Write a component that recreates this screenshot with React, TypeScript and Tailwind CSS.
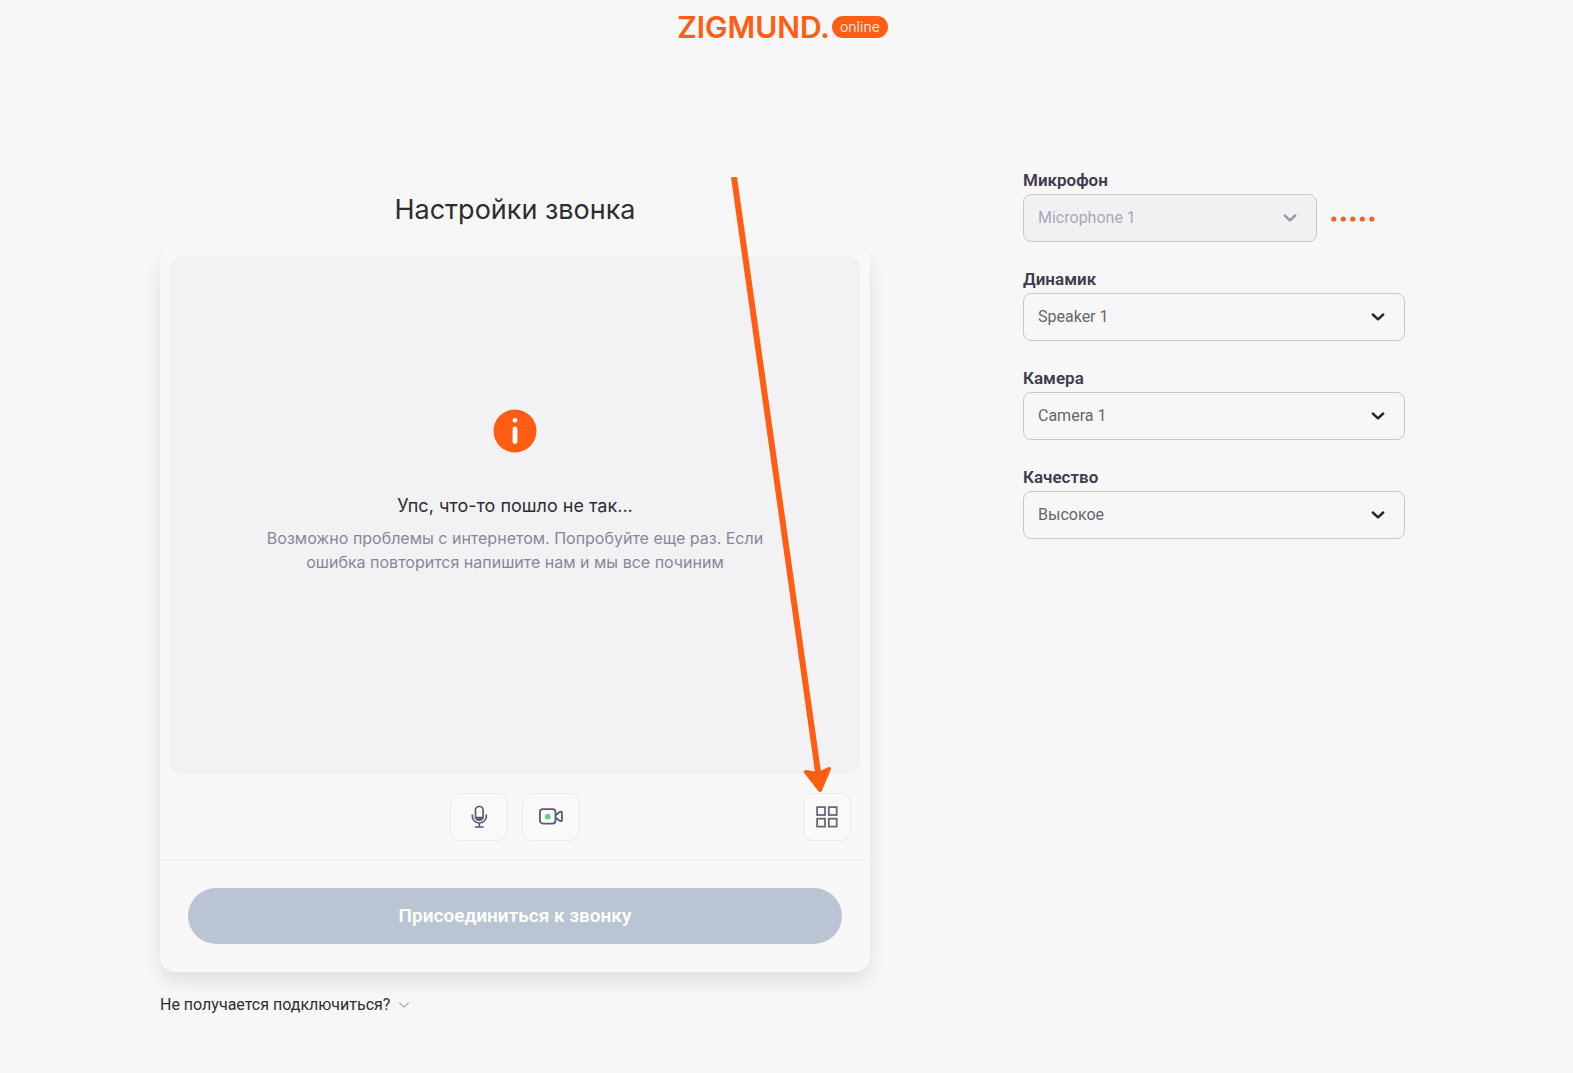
import { useState } from "react"

interface SelectFieldProps {
  id: string
  label: string
  options: string[]
  disabled?: boolean
  level?: boolean
}

function Chevron({ className }: { className: string }) {
  return (
    <svg viewBox="0 0 14 8" fill="none" stroke="currentColor" strokeLinecap="round" strokeLinejoin="round" className={className}>
      <path d="M1.8 1.5 7 6.3 12.2 1.5" />
    </svg>
  )
}

function SelectField({ id, label, options, disabled, level }: SelectFieldProps) {
  const [value, setValue] = useState(options[0])

  return (
    <div className="flex flex-col">
      <label htmlFor={id} className="text-[17px] leading-7 font-semibold text-[#3f3a4d]">
        {label}
      </label>
      <div className="flex items-center gap-3.5">
        <div className="relative flex-1">
          <select
            id={id}
            value={value}
            disabled={disabled}
            onChange={(e) => setValue(e.target.value)}
            className="block h-12 w-full appearance-none rounded-lg border border-[#c9c9cb] px-3.5 text-base text-[#66666f] disabled:bg-[#f1f1f4] disabled:text-[#a9a9b6] disabled:opacity-100"
          >
            {options.map((o) => (
              <option key={o}>{o}</option>
            ))}
          </select>
          <Chevron
            className={`pointer-events-none absolute top-5 right-5 h-2 w-3.5 stroke-[2.4] ${
              disabled ? "text-[#9a9aa8]" : "text-[#26262b]"
            }`}
          />
        </div>
        {/* Nivel del micrófono */}
        {level && (
          <div className="flex w-[74px] pt-0.5">
            <svg viewBox="0 0 44 6" fill="#f4622a" className="h-1.5 w-11">
              {[0, 1, 2, 3, 4].map((i) => (
                <circle key={i} cx={2.8 + i * 9.5} cy="3" r="2.6" />
              ))}
            </svg>
          </div>
        )}
      </div>
    </div>
  )
}

function MicIcon() {
  return (
    <svg viewBox="0 0 24 24" fill="none" stroke="#5d5a6e" strokeWidth="1.7" strokeLinecap="round" className="size-6">
      <rect x="8.5" y="1.5" width="7.6" height="13.6" rx="3.4" />
      <path d="M8.6 11.8h7.400c-.2 2-1.700 3.200-3.700 3.200s-3.500-1.200-3.700-3.200z" fill="#5d5a6e" stroke="none" />
      <path d="M5.300 10v1.200a7 6.800 0 0 0 14 0V10M12.300 18v3.600M8.600 22h7.400" />
    </svg>
  )
}

function CameraIcon() {
  return (
    <svg viewBox="0 0 26 24" fill="none" stroke="#5d5a6e" strokeWidth="1.8" strokeLinejoin="round" className="h-6 w-[26px]">
      <rect x="1.9" y="4.2" width="15.6" height="14.4" rx="3" />
      <path d="m17.7 10 4.400-3.200q1.800-.7 1.800.8v7.600q0 1.500-1.800.8L17.700 12.800" />
      <circle cx="9.700" cy="11.600" r="2.900" fill="#5fd283" stroke="none" />
    </svg>
  )
}

function GridIcon() {
  return (
    <svg viewBox="0 0 22 22" fill="none" stroke="#6a6876" strokeWidth="1.8" className="size-[22px]">
      <rect x="1.1" y="1.1" width="7.9" height="7.9" />
      <rect x="12.8" y="1.1" width="7.9" height="7.9" />
      <rect x="1.1" y="12.7" width="7.9" height="7.9" />
      <rect x="12.8" y="12.7" width="7.9" height="7.9" />
    </svg>
  )
}

const botonControl =
  "flex h-12 items-center justify-center rounded-[10px] border border-[#ebebed] bg-[#f9f9fa]"

export default function App() {
  return (
    <div className="min-h-screen bg-[#f7f7f7] font-[Roboto,'Liberation_Sans',sans-serif]">
      <header className="flex justify-center pt-1.5 pr-2">
        <a href="#" className="flex h-[42px] items-center gap-0.5 text-[#ff5c14]">
          <span className="font-[Inter,sans-serif] text-[30px] font-semibold">ZIGMUND.</span>
          <span className="flex h-[22px] items-center rounded-full bg-[#ff5c14] px-2 pb-px font-[Inter,sans-serif] text-sm leading-5 text-[#ffe3d6]">
            online
          </span>
        </a>
      </header>

      <main className="flex items-start gap-[153px] pt-[118px] pr-[168px] pl-[160px]">
        <section className="flex-1 pt-6">
          <h1 className="pb-4 text-center font-[Inter,sans-serif] text-[27px] leading-10 text-[#2d2d2f]">
            Настройки звонка
          </h1>

          <div className="rounded-2xl bg-[#f8f8f8] pt-2.5 shadow-[0_10px_18px_rgba(0,0,0,0.09)]">
            <div className="mx-2.5 flex h-[518px] flex-col items-center rounded-xl bg-[#f2f2f4] pt-[153px] text-center">
              <svg viewBox="0 0 44 44" className="size-11">
                <circle cx="22" cy="22" r="21.5" fill="#ff5c14" />
                <circle cx="22" cy="11.3" r="2.4" fill="#fff" />
                <rect x="19.6" y="17.5" width="4.8" height="17.5" rx="2.4" fill="#fff" />
              </svg>
              <h2 className="pt-[39px] font-[Inter,sans-serif] text-lg leading-7 text-[#2d2d33]">
                Упс, что-то пошло не так...
              </h2>
              <p className="max-w-[520px] pt-1.5 font-[Inter,sans-serif] text-base leading-6 text-[#87879a]">
                Возможно проблемы с интернетом. Попробуйте еще раз. Если ошибка повторится напишите нам и мы все починим
              </p>
            </div>

            <div className="grid grid-cols-[1fr_auto_1fr] border-b border-[#eeeeef] px-[19px] pt-[19px] pb-[18px]">
              <div className="col-start-2 flex gap-3.5">
                <button type="button" aria-label="Микрофон" className={`${botonControl} w-[58px]`}>
                  <MicIcon />
                </button>
                <button type="button" aria-label="Камера" className={`${botonControl} w-[58px]`}>
                  <CameraIcon />
                </button>
              </div>
              <div className="relative justify-self-end">
                <button type="button" aria-label="Сетка" className={`${botonControl} w-12`}>
                  <GridIcon />
                </button>
                {/* Flecha que señala el botón */}
                <svg
                  viewBox="0 0 104 616"
                  className="pointer-events-none absolute right-5 bottom-full h-[616px] w-[104px] max-w-none"
                >
                  <path d="M7 0 91 595" stroke="#ff5c14" strokeWidth="6" fill="none" />
                  <path
                    d="M79 595 91 597 102 592 93 613z"
                    fill="#ff5c14"
                    stroke="#ff5c14"
                    strokeWidth="4"
                    strokeLinejoin="round"
                  />
                </svg>
              </div>
            </div>

            <div className="px-7 py-7">
              <button
                type="button"
                disabled
                className="h-14 w-full rounded-full bg-[#bac4d2] text-[19px] font-semibold text-white"
              >
                Присоединиться к звонку
              </button>
            </div>
          </div>

          <button type="button" className="mt-[21px] flex items-center gap-2 text-base leading-6 text-[#2d2d2f]">
            Не получается подключиться?
            <Chevron className="h-2 w-3 stroke-[1.3] text-[#a5a5a8]" />
          </button>
        </section>

        <aside className="flex w-[382px] flex-col gap-[23px]">
          <SelectField id="mic" label="Микрофон" options={["Microphone 1"]} disabled level />
          <SelectField id="speaker" label="Динамик" options={["Speaker 1"]} />
          <SelectField id="camera" label="Камера" options={["Camera 1"]} />
          <SelectField id="quality" label="Качество" options={["Высокое"]} />
        </aside>
      </main>
    </div>
  )
}
